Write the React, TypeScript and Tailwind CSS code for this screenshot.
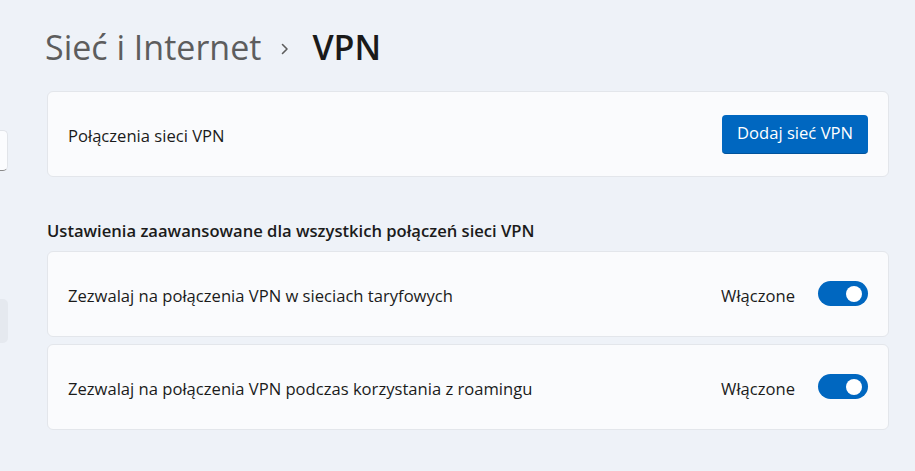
import React from 'react';

const Toggle = () => (
  <span className="relative inline-flex h-[25px] w-[50px] items-center rounded-full bg-[#0067c0]">
    <span className="absolute right-[6px] h-[16px] w-[16px] rounded-full bg-white" />
  </span>
);

const ToggleRow = ({ label }: { label: string }) => (
  <div className="flex h-[86px] items-center justify-between rounded-[6px] border border-[#e3e6eb] bg-[#fafbfd] pl-[20px] pr-[20px]">
    <span className="pt-[4px]">{label}</span>
    <div className="flex items-center gap-[23px]">
      <span className="pt-[4px]">Włączone</span>
      <Toggle />
    </div>
  </div>
);

export default function App() {
  return (
    <div
      className="relative h-[471px] w-[915px] overflow-hidden bg-[#eef2f8] text-[16.6px] text-[#1b1b1b]"
      style={{ fontFamily: '"Open Sans", "Noto Sans", sans-serif' }}
    >
      {/* ucięte elementy panelu nawigacji */}
      <div className="absolute left-[-40px] top-[130px] h-[41px] w-[48px] rounded-[5px] border border-[#e1e4e9] border-b-[#8a8a8a] bg-[#fbfcfe]" />
      <div className="absolute left-[-40px] top-[299px] h-[44px] w-[48px] rounded-[5px] bg-[#e5e9ef]" />

      <main className="pl-[47px] pr-[26px] pt-[24px]">
        <h1 className="flex items-center text-[34px] leading-[46px]">
          <span className="-ml-[2px] text-[#5d5d5d]">Sieć i Internet</span>
          <svg className="ml-[19px] mr-[22px] mt-[4px]" width="10" height="14" viewBox="0 0 10 14" fill="none">
            <path d="M2.5 2.5 L7 7 L2.5 11.5" stroke="#5d5d5d" strokeWidth="1.6" strokeLinecap="round" strokeLinejoin="round" />
          </svg>
          <span className="font-semibold text-[#1a1a1a]">VPN</span>
        </h1>

        <section className="mt-[21px] flex h-[86px] items-center justify-between rounded-[6px] border border-[#e3e6eb] bg-[#fafbfd] pl-[20px] pr-[20px]">
          <span className="pt-[4px]">Połączenia sieci VPN</span>
          <button className="h-[39px] rounded-[4px] border-b border-[#00539c] bg-[#0067c0] px-[15px] text-white">
            Dodaj sieć VPN
          </button>
        </section>

        <h2 className="mt-[42px] font-semibold leading-[24px]">
          Ustawienia zaawansowane dla wszystkich połączeń sieci VPN
        </h2>

        <div className="mt-[8px] flex flex-col gap-[7px]">
          <ToggleRow label="Zezwalaj na połączenia VPN w sieciach taryfowych" />
          <ToggleRow label="Zezwalaj na połączenia VPN podczas korzystania z roamingu" />
        </div>
      </main>
    </div>
  );
}
